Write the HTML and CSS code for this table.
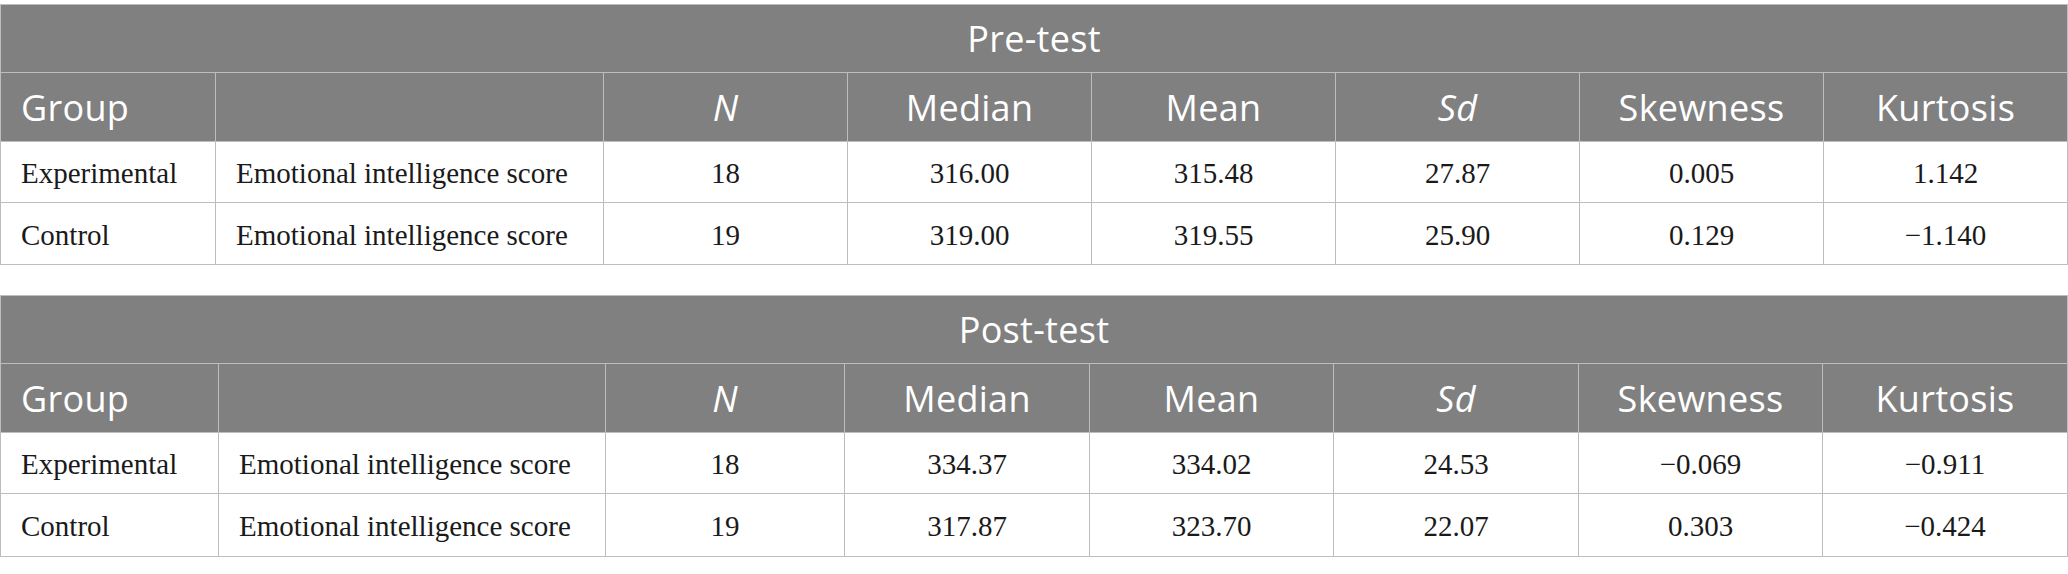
FILE: index.html
```html
<!DOCTYPE html>
<html lang="en">
<head>
<meta charset="utf-8">
<title>Pre-test and Post-test</title>
<link rel="stylesheet" href="styles.css">
</head>
<body>
<div class="page">
  <table class="stats pre">
    <colgroup>
      <col class="c-group"><col class="c-measure"><col class="c-n"><col class="c-median"><col class="c-mean"><col class="c-sd"><col class="c-skew"><col class="c-kurt">
    </colgroup>
    <thead>
      <tr class="title-row"><th colspan="8">Pre-test</th></tr>
      <tr class="head-row">
        <th class="left">Group</th><th></th><th><i>N</i></th><th>Median</th><th>Mean</th><th><i>Sd</i></th><th>Skewness</th><th>Kurtosis</th>
      </tr>
    </thead>
    <tbody>
      <tr class="r1"><td class="left">Experimental</td><td class="left">Emotional intelligence score</td><td>18</td><td>316.00</td><td>315.48</td><td>27.87</td><td>0.005</td><td>1.142</td></tr>
      <tr class="r2"><td class="left">Control</td><td class="left">Emotional intelligence score</td><td>19</td><td>319.00</td><td>319.55</td><td>25.90</td><td>0.129</td><td>&minus;1.140</td></tr>
    </tbody>
  </table>
  <table class="stats post">
    <colgroup>
      <col class="c-group"><col class="c-measure"><col class="c-n"><col class="c-median"><col class="c-mean"><col class="c-sd"><col class="c-skew"><col class="c-kurt">
    </colgroup>
    <thead>
      <tr class="title-row"><th colspan="8">Post-test</th></tr>
      <tr class="head-row">
        <th class="left">Group</th><th></th><th><i>N</i></th><th>Median</th><th>Mean</th><th><i>Sd</i></th><th>Skewness</th><th>Kurtosis</th>
      </tr>
    </thead>
    <tbody>
      <tr class="r1"><td class="left">Experimental</td><td class="left">Emotional intelligence score</td><td>18</td><td>334.37</td><td>334.02</td><td>24.53</td><td>&minus;0.069</td><td>&minus;0.911</td></tr>
      <tr class="r2"><td class="left">Control</td><td class="left">Emotional intelligence score</td><td>19</td><td>317.87</td><td>323.70</td><td>22.07</td><td>0.303</td><td>&minus;0.424</td></tr>
    </tbody>
  </table>
</div>
</body>
</html>
```
FILE: styles.css
```css
html, body {
  margin: 0;
  padding: 0;
  background: #ffffff;
}

.page {
  display: flex;
  flex-direction: column;
  gap: 30px;
  padding-top: 4px;
}

.stats {
  width: 2068px;
  border-collapse: collapse;
  table-layout: fixed;
}

.stats th,
.stats td {
  border: 1px solid #bdbdbd;
  padding: 0 20px;
  text-align: center;
  vertical-align: middle;
  white-space: nowrap;
  overflow: hidden;
}

.stats th {
  background: #7f807f;
  color: #ffffff;
  font-family: "Open Sans", "Noto Sans", sans-serif;
  font-weight: 400;
  font-size: 36px;
  letter-spacing: 0.3px;
  line-height: 44px;
}

.stats td {
  background: #ffffff;
  color: #1a1a1a;
  font-family: "Liberation Serif", "Times New Roman", serif;
  font-size: 29px;
  line-height: 34px;
}

.stats .left {
  text-align: left;
}

.title-row th {
  height: 66px;
  padding-top: 1px;
}

.head-row th {
  height: 66px;
  padding-top: 2px;
}

.r1 td {
  height: 58px;
  padding-top: 2px;
}

.r2 td {
  height: 59px;
  padding-top: 2px;
}

.post .r2 td {
  height: 60px;
}

.pre .c-group { width: 215px; }
.pre .c-measure { width: 388px; }
.pre .c-n,
.pre .c-median,
.pre .c-mean,
.pre .c-sd,
.pre .c-skew,
.pre .c-kurt { width: 244px; }

.post .c-group { width: 218px; }
.post .c-measure { width: 387px; }
.post .c-n { width: 239px; }
.post .c-median { width: 245px; }
.post .c-mean { width: 244px; }
.post .c-sd { width: 245px; }
.post .c-skew { width: 244px; }
.post .c-kurt { width: 245px; }
```
